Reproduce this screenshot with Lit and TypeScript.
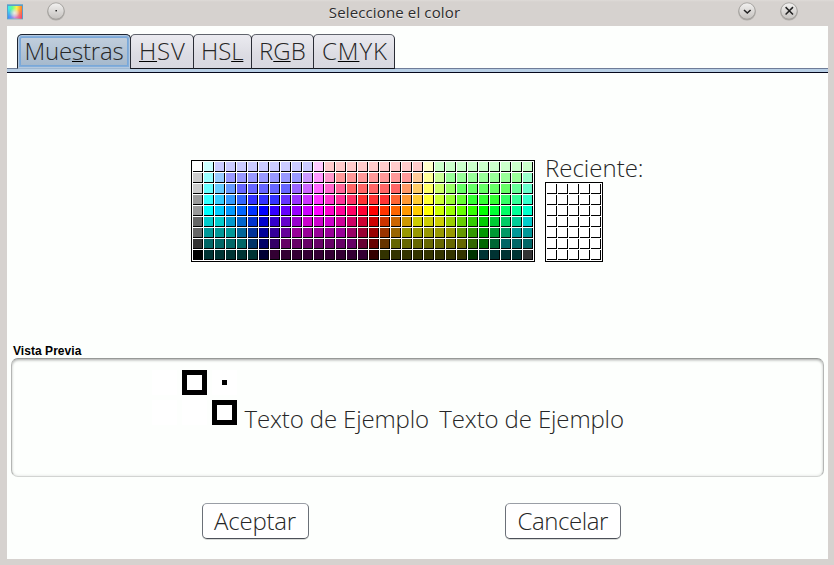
import { LitElement, html, css, svg } from "lit";
import { customElement, property } from "lit/decorators.js";
import { classMap } from "lit/directives/class-map.js";
import { styleMap } from "lit/directives/style-map.js";

// Each row is a list of "rgb*count" runs in three-digit hex.
const ROWS = [
  "fff cff ccf*9 fcf fcc*9 ffc cfc*9",
  "ccc 9ff 9cf 99f*7 c9f f9f f9c f99*7 fc9 ff9 cf9 9f9*7 9fc",
  "ccc 6ff 6cf 69f 66f*5 96f c6f f6f f6c f69 f66*5 f96 fc6 ff6 cf6 9f6 6f6*5 6f9 6fc",
  "999 3ff 3cf 39f 36f 33f*3 63f 93f c3f f3f f3c f39 f36 f33*3 f63 f93 fc3 ff3 cf3 9f3 6f3 3f3*3 3f6 3f9 3fc",
  "999 0ff 0cf 09f 06f 03f 00f 30f 60f 90f c0f f0f f0c f09 f06 f03 f00 f30 f60 f90 fc0 ff0 cf0 9f0 6f0 3f0 0f0 0f3 0f6 0f9 0fc",
  "666 0cc*2 09c 06c 03c 00c 30c 60c 90c c0c*3 c09 c06 c03 c00 c30 c60 c90 cc0*3 9c0 6c0 3c0 0c0 0c3 0c6 0c9 0cc",
  "666 099*3 069 039 009 309 609 909*5 906 903 900 930 960 990*5 690 390 090 093 096 099*2",
  "333 066*4 036 006 306 606*7 603 600 630 660*7 360 060 063 066*3",
  "000 033*5 003 303*9 300 330*8 030 033*4 333",
];

const PALETTE = ROWS.flatMap((row) =>
  row.split(" ").flatMap((run) => {
    const [color, count = "1"] = run.split("*");
    return Array<string>(Number(count)).fill(`#${color}`);
  })
);

const RECENT = Array<string>(35).fill("#fff");

interface Tab {
  before: string;
  key: string;
  after: string;
  width: number;
  indent: number;
  spacing: number;
}

const TABS: Tab[] = [
  { before: "Mue", key: "s", after: "tras", width: 114, indent: 6.5, spacing: -0.2 },
  { before: "", key: "H", after: "SV", width: 64, indent: 8, spacing: 0.8 },
  { before: "HS", key: "L", after: "", width: 59, indent: 7, spacing: -0.1 },
  { before: "R", key: "G", after: "B", width: 63, indent: 7, spacing: 0 },
  { before: "C", key: "M", after: "YK", width: 82, indent: 8, spacing: 0.9 },
];

@customElement("swatch-grid")
export class SwatchGrid extends LitElement {
  @property({ attribute: false }) colors: string[] = [];
  @property({ type: Number }) columns = 1;

  static styles = css`
    :host {
      display: block;
      flex: none;
    }
    .grid {
      display: grid;
      grid-auto-rows: 10px;
      gap: 1px;
      padding: 1px;
      border: 1px solid #000;
      background: #fff;
      width: max-content;
    }
    .cell {
      border-right: 1px solid #000;
      border-bottom: 1px solid #000;
    }
  `;

  render() {
    return html`<div class="grid" style=${styleMap({ gridTemplateColumns: `repeat(${this.columns}, 10px)` })}>
      ${this.colors.map((c) => html`<div class="cell" style=${styleMap({ background: c })}></div>`)}
    </div>`;
  }
}

@customElement("title-bar")
export class TitleBar extends LitElement {
  static styles = css`
    :host {
      display: flex;
      height: 26px;
      flex: none;
      box-sizing: border-box;
      padding: 0 35px 0 7px;
      background: linear-gradient(#dedbd8 0, #d6d2cf 2px, #d6d2cf 100%);
      font: 15px/22px "Open Sans", sans-serif;
      color: #2c2c2c;
    }
    .app {
      width: 16px;
      height: 16px;
      margin-top: 4px;
    }
    .round {
      width: 20px;
      height: 22px;
    }
    .menu {
      margin-left: 23px;
    }
    .close {
      margin-left: 22px;
    }
    .title {
      flex: 1;
      text-align: center;
      margin-top: 1px;
      padding-right: 14px;
      letter-spacing: 0.13px;
      text-shadow: 0 1px 0 #efedec;
    }
  `;

  private round(cls: string, glyph: unknown) {
    return html`<svg class="round ${cls}" viewBox="0 0 20 22">
      <defs>
        <linearGradient id="g" x2="0" y2="1">
          <stop offset="0" stop-color="#f3f2f1" />
          <stop offset="1" stop-color="#c4c1be" />
        </linearGradient>
      </defs>
      <circle cx="10" cy="11.8" r="8.8" fill="#8a8784" opacity=".5" />
      <circle cx="10" cy="11" r="8.2" fill="url(#g)" stroke="#9c9996" stroke-width=".8" />
      ${glyph}
    </svg>`;
  }

  render() {
    return html`
      <svg class="app" viewBox="0 0 16 16">
        <defs>
          <linearGradient id="hue">
            <stop offset="0" stop-color="#38e8f8" />
            <stop offset=".3" stop-color="#60ff90" />
            <stop offset=".62" stop-color="#fff048" />
            <stop offset="1" stop-color="#ff7a28" />
          </linearGradient>
          <linearGradient id="low">
            <stop offset="0" stop-color="#3878ff" />
            <stop offset=".45" stop-color="#c878ff" />
            <stop offset="1" stop-color="#ff3868" />
          </linearGradient>
          <linearGradient id="fade" x2="0" y2="1">
            <stop offset=".3" stop-color="#000" />
            <stop offset=".95" stop-color="#fff" />
          </linearGradient>
          <radialGradient id="shine">
            <stop offset="0" stop-color="#fff" stop-opacity=".7" />
            <stop offset="1" stop-color="#fff" stop-opacity="0" />
          </radialGradient>
          <mask id="m"><rect width="16" height="16" fill="url(#fade)" /></mask>
        </defs>
        <rect width="16" height="15" y=".3" fill="#5a9fc8" />
        <rect x="1" y="2" width="14" height="12.5" fill="url(#hue)" />
        <rect x="1" y="2" width="14" height="12.5" fill="url(#low)" mask="url(#m)" />
        <circle cx="7.5" cy="9" r="5" fill="url(#shine)" />
      </svg>
      ${this.round("menu", svg`<rect x="9.5" y="10" width="1.4" height="1.4" fill="#111" />`)}
      <div class="title">Seleccione el color</div>
      ${this.round("min", svg`<path d="M7 10l3.3 3 3.3-3" fill="none" stroke="#222" stroke-width="1.6" />`)}
      ${this.round("close", svg`<path d="M6.6 7.1l7.4 7.4M14 7.1l-7.4 7.4" fill="none" stroke="#222" stroke-width="1.5" />`)}
    `;
  }
}

@customElement("app-root")
export class AppRoot extends LitElement {
  static styles = css`
    :host {
      display: flex;
      flex-direction: column;
      width: 834px;
      height: 565px;
      overflow: hidden;
      background: #d6d2cf;
      color: #262626;
      font: 300 24px/33px "Open Sans", sans-serif;
      white-space: nowrap;
    }
    .body {
      flex: 1;
      display: flex;
      flex-direction: column;
      margin: 0 6px 6px 7px;
      padding-top: 8px;
      background: #fdfffd;
    }
    .tabs {
      display: flex;
      height: 35px;
      padding-left: 10px;
      margin-bottom: -1px;
    }
    .tab {
      position: relative;
      box-sizing: border-box;
      margin-right: -1px;
      height: 35px;
      border: 1px solid #2a2d36;
      border-top-color: #60646c;
      border-bottom-color: #14161e;
      border-radius: 5px 5px 0 0;
      background: linear-gradient(#ebebf0, #dcdce3 60%, #d8d8e0);
      line-height: 32px;
    }
    .tab.selected {
      border-color: #1c2430;
      border-bottom-color: #9fb8d2;
      background: linear-gradient(#c3d0de, #a3b7cb);
      box-shadow: inset 0 0 0 1px #b5c9de, inset 0 0 0 2px #84aedb, inset 0 0 0 3px #7aa8d8;
    }
    .key {
      text-decoration: underline;
      text-decoration-color: #000;
      text-decoration-thickness: 1px;
      text-underline-offset: 1px;
      text-decoration-skip-ink: none;
    }
    .strip {
      height: 3px;
      flex: none;
      border-top: 1px solid #6f7d98;
      border-bottom: 1px solid #05081c;
      background: #b8cfe5;
    }
    .samples {
      display: flex;
      height: 270px;
      box-sizing: border-box;
      padding: 87px 0 0 184px;
      gap: 10px;
      align-items: flex-start;
    }
    .recent {
      display: flex;
      flex-direction: column;
      margin-top: -9px;
    }
    .label {
      height: 31px;
    }
    .caption {
      font: bold 12px/14px "Liberation Sans", Arial, sans-serif;
      letter-spacing: 0.05px;
      margin: 1px 0 0 6px;
      height: 14px;
      color: #000;
    }
    .preview {
      display: flex;
      box-sizing: border-box;
      height: 119px;
      margin: 0 4px;
      padding: 11px 0 0 140px;
      border: 1px solid #b4b6b4;
      border-top-color: #979997;
      border-bottom-color: #d2d4d2;
      border-radius: 7px;
      box-shadow: inset 0 2px 3px -1px #a9aba9, inset 0 0 3px #dcdedc;
    }
    .chips {
      display: grid;
      grid-template-columns: repeat(3, 25px);
      grid-auto-rows: 25px;
      gap: 5px;
    }
    .chip {
      background: #fff;
      box-sizing: border-box;
    }
    .framed {
      border: 5px solid #000;
    }
    .dot {
      background: linear-gradient(#000, #000) center / 5px 5px no-repeat #fff;
    }
    .text {
      margin: 32px 0 0 7.5px;
      height: 33px;
      letter-spacing: -0.13px;
    }
    .text + .text {
      margin-left: 10.3px;
    }
    .actions {
      display: flex;
      gap: 196px;
      padding: 26px 0 0 195px;
    }
    .button {
      box-sizing: border-box;
      height: 36px;
      border: 1px solid #6b7078;
      border-top-color: #9a9ea6;
      border-bottom-color: #4c5058;
      border-radius: 5px;
      background: #fff;
      font: inherit;
      line-height: 34px;
      color: inherit;
      text-align: left;
      box-shadow: 0 1px 0 #d8dad8;
    }
    .ok {
      width: 107px;
      padding: 0 0 0 11px;
      letter-spacing: -0.2px;
    }
    .cancel {
      width: 116px;
      padding: 0 0 0 11.5px;
      letter-spacing: -0.42px;
    }
  `;

  render() {
    return html`
      <title-bar></title-bar>
      <div class="body">
        <div class="tabs">
          ${TABS.map(
            (t, i) => html`<div
              class=${classMap({ tab: true, selected: i === 0 })}
              style=${styleMap({
                width: `${t.width}px`,
                paddingLeft: `${t.indent}px`,
                letterSpacing: `${t.spacing}px`,
              })}
            >${t.before}<span class="key">${t.key}</span>${t.after}</div>`
          )}
        </div>
        <div class="strip"></div>
        <div class="samples">
          <swatch-grid .colors=${PALETTE} .columns=${31}></swatch-grid>
          <div class="recent">
            <div class="label">Reciente:</div>
            <swatch-grid .colors=${RECENT} .columns=${5}></swatch-grid>
          </div>
        </div>
        <div class="caption">Vista Previa</div>
        <div class="preview">
          <div class="chips">
            <div class="chip"></div>
            <div class="chip framed"></div>
            <div class="chip dot"></div>
            <div class="chip"></div>
            <div class="chip"></div>
            <div class="chip framed"></div>
          </div>
          <div class="text">Texto de Ejemplo</div>
          <div class="text">Texto de Ejemplo</div>
        </div>
        <div class="actions">
          <button class="button ok">Aceptar</button>
          <button class="button cancel">Cancelar</button>
        </div>
      </div>
    `;
  }
}
